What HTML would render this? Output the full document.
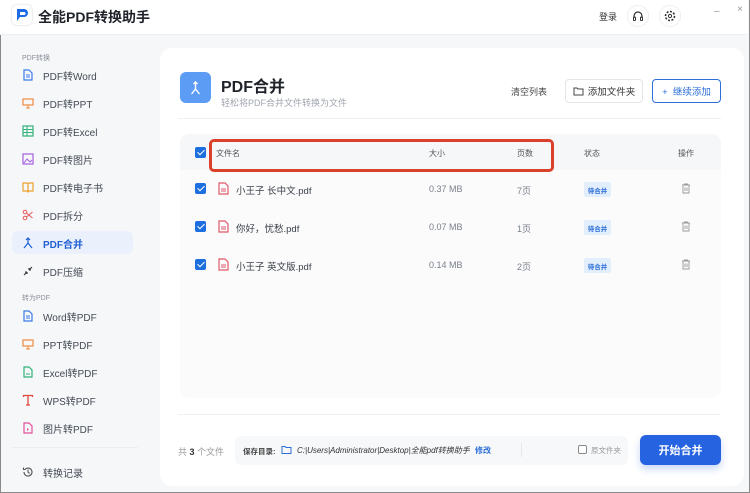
<!DOCTYPE html>
<html><head><meta charset="utf-8"><style>
*{box-sizing:border-box;margin:0;padding:0}
body{width:750px;height:493px;overflow:hidden;font-family:"Liberation Sans","Noto Sans CJK SC",sans-serif;background:#fff;position:relative}
.win{position:absolute;left:0;top:0;width:750px;height:493px;border:1px solid #8a8a8a;border-top:none;background:#f6f7f9}
.hdr{position:absolute;left:0;top:0;width:748px;height:35px;background:#fff;border-bottom:1px solid #eceef1}
.abs{position:absolute}
.side{font-size:10px;color:#3a3f47}
.it{position:absolute;left:22px;height:16px;display:flex;align-items:center;font-size:10px;color:#444b55}
.it svg{width:12px;height:12px;margin-right:9px}
.lbl{position:absolute;left:22px;font-size:7px;color:#8a909a}
.card{position:absolute;left:160px;top:48px;width:584px;height:438px;background:#fff;border-radius:12px}
.tbl{position:absolute;left:180px;top:134px;width:541px;height:264px;background:#fbfbfc;border-radius:9px}
.cb{position:absolute;width:11px;height:11px;background:#1d6fe0;border-radius:2px}
.cb:after{content:"";position:absolute;left:3.5px;top:1px;width:3px;height:6px;border:solid #fff;border-width:0 1.6px 1.6px 0;transform:rotate(45deg)}
.t{position:absolute;font-size:9.5px;color:#3b414a;white-space:nowrap}
.g{color:#7a808a}
.tag{position:absolute;width:27px;height:15px;background:#e3eefd;color:#2d6fd8;font-size:6.5px;font-weight:bold;display:flex;align-items:center;justify-content:center;border-radius:2px}
</style></head><body>
<div class="win"></div>
<div class="hdr"></div>
<div class="abs" style="left:12px;top:5px;width:20px;height:20px;border-radius:5px;background:#fff;box-shadow:0 0 2px #ccd"><svg width="20" height="20" viewBox="0 0 20 20"><path d="M5 4h7a4 4 0 0 1 0 8H8l-3 4z" fill="#1e6be6"/><path d="M8 7h4a1.5 1.5 0 0 1 0 3H8z" fill="#fff"/></svg></div>
<div class="abs" style="left:38px;top:7px;font-size:14px;font-weight:bold;color:#1f2329">全能PDF转换助手</div>
<div class="abs" style="left:599px;top:10px;font-size:9px;color:#333">登录</div>
<div class="abs" style="left:627px;top:5px;width:22px;height:22px;border-radius:50%;border:1px solid #eee"><svg width="20" height="20" viewBox="0 0 20 20"><path d="M6 12v-2a4 4 0 0 1 8 0v2" fill="none" stroke="#333" stroke-width="1.2"/><rect x="5.5" y="11" width="2" height="3.5" rx=".8" fill="none" stroke="#333"/><rect x="12.5" y="11" width="2" height="3.5" rx=".8" fill="none" stroke="#333"/></svg></div>
<div class="abs" style="left:659px;top:5px;width:22px;height:22px;border-radius:50%;border:1px solid #eee"><svg width="20" height="20" viewBox="0 0 20 20"><circle cx="10" cy="10" r="4.5" fill="none" stroke="#333" stroke-width="1.6" stroke-dasharray="2 1.5"/><circle cx="10" cy="10" r="1.6" fill="none" stroke="#333"/></svg></div>
<div class="abs" style="left:714px;top:6px;font-size:10px;color:#999">–</div>
<div class="abs" style="left:737px;top:4px;font-size:10px;color:#999">×</div>

<div class="lbl" style="top:53px">PDF转换</div>
<div class="it" style="top:67px"><svg viewBox="0 0 12 12"><path d="M2 1h5l3 3v7H2z" fill="none" stroke="#3b7be6" stroke-width="1.2"/><path d="M4 6h4M4 8h4" stroke="#3b7be6"/></svg>PDF转Word</div>
<div class="it" style="top:95px"><svg viewBox="0 0 12 12"><rect x="1" y="2" width="10" height="6" fill="none" stroke="#f08a3c" stroke-width="1.2"/><path d="M6 8v3M4 11h4" stroke="#f08a3c"/></svg>PDF转PPT</div>
<div class="it" style="top:123px"><svg viewBox="0 0 12 12"><rect x="1" y="1" width="10" height="10" fill="none" stroke="#2fb27a" stroke-width="1.2"/><path d="M1 4.5h10M1 7.5h10M5 1v10" stroke="#2fb27a"/></svg>PDF转Excel</div>
<div class="it" style="top:151px"><svg viewBox="0 0 12 12"><rect x="1" y="1" width="10" height="10" fill="none" stroke="#a35fdf" stroke-width="1.2"/><path d="M2 10l3-4 3 3 2-2" fill="none" stroke="#a35fdf"/></svg>PDF转图片</div>
<div class="it" style="top:179px"><svg viewBox="0 0 12 12"><path d="M1 2h4l1 1 1-1h4v8H7l-1 1-1-1H1zM6 3v8" fill="none" stroke="#eea12f" stroke-width="1.2"/></svg>PDF转电子书</div>
<div class="it" style="top:207px"><svg viewBox="0 0 12 12"><circle cx="3" cy="3" r="1.8" fill="none" stroke="#e65a5a"/><circle cx="3" cy="9" r="1.8" fill="none" stroke="#e65a5a"/><path d="M4.5 4l6 5M4.5 8l6-5" stroke="#e65a5a"/></svg>PDF拆分</div>
<div class="abs" style="left:12px;top:231px;width:121px;height:23px;background:#eaf1fd;border-radius:6px"></div>
<div class="it" style="top:235px;color:#1f5fd1;font-weight:bold"><svg viewBox="0 0 12 12"><path d="M6 1v5L2 11M6 6l4 5M4 3l2-2 2 2" fill="none" stroke="#1f5fd1" stroke-width="1.2"/></svg>PDF合并</div>
<div class="it" style="top:263px"><svg viewBox="0 0 12 12"><path d="M2 10l3-3M5 7H3M5 7v2M10 2L7 5M7 5h2M7 5V3" fill="none" stroke="#333" stroke-width="1.1"/></svg>PDF压缩</div>
<div class="lbl" style="top:293px">转为PDF</div>
<div class="it" style="top:308px"><svg viewBox="0 0 12 12"><path d="M2 1h5l3 3v7H2z" fill="none" stroke="#3b7be6" stroke-width="1.2"/><path d="M4 6h4M4 8h4" stroke="#3b7be6"/></svg>Word转PDF</div>
<div class="it" style="top:336px"><svg viewBox="0 0 12 12"><rect x="1" y="2" width="10" height="6" fill="none" stroke="#f08a3c" stroke-width="1.2"/><path d="M6 8v3M4 11h4" stroke="#f08a3c"/></svg>PPT转PDF</div>
<div class="it" style="top:364px"><svg viewBox="0 0 12 12"><path d="M2 1h5l3 3v7H2z" fill="none" stroke="#2fb27a" stroke-width="1.2"/><path d="M5 7v2M7 7v2" stroke="#2fb27a"/></svg>Excel转PDF</div>
<div class="it" style="top:392px"><svg viewBox="0 0 12 12"><path d="M1.5 3V1.5h9V3M6 1.5V11M4 11h4" fill="none" stroke="#e0483e" stroke-width="1.3"/></svg>WPS转PDF</div>
<div class="it" style="top:420px"><svg viewBox="0 0 12 12"><path d="M2 1h5l3 3v7H2z" fill="none" stroke="#e34f9a" stroke-width="1.2"/><path d="M5 6l2 1.5L5 9z" fill="#e34f9a"/></svg>图片转PDF</div>
<div class="abs" style="left:12px;top:447px;width:126px;height:1px;background:#eceef1"></div>
<div class="it" style="top:464px"><svg viewBox="0 0 12 12"><path d="M2 6a4 4 0 1 0 1.2-2.8M1.5 1.5v2h2M6 3.5V6l1.6 1.4" fill="none" stroke="#555" stroke-width="1.1"/></svg>转换记录</div>

<div class="card"></div>
<div class="abs" style="left:180px;top:72px;width:31px;height:31px;background:#5d9cf5;border-radius:6px"><svg width="31" height="31" viewBox="0 0 31 31"><path d="M15.5 10v7l-4 5M15.5 17l4 5M13.5 12l2-2 2 2" fill="none" stroke="#fff" stroke-width="1.4"/></svg></div>
<div class="abs" style="left:221px;top:73px;font-size:16px;font-weight:bold;color:#1f2329">PDF合并</div>
<div class="abs" style="left:221px;top:96px;font-size:9px;color:#a0a6af">轻松将PDF合并文件转换为文件</div>
<div class="abs" style="left:511px;top:85px;font-size:9px;color:#444">清空列表</div>
<div class="abs" style="left:565px;top:79px;width:78px;height:24px;border:1px solid #e2e5ea;border-radius:4px;font-size:9.5px;color:#333;display:flex;align-items:center;justify-content:center"><svg width="11" height="10" viewBox="0 0 11 10" style="margin-right:4px"><path d="M1 2h3l1 1h5v6H1z" fill="none" stroke="#444"/></svg>添加文件夹</div>
<div class="abs" style="left:652px;top:79px;width:69px;height:24px;border:1px solid #2d6fd8;border-radius:4px;font-size:9.5px;color:#2d6fd8;display:flex;align-items:center;justify-content:center">+&nbsp; 继续添加</div>
<div class="abs" style="left:178px;top:118px;width:543px;height:1px;background:#eef0f2"></div>

<div class="tbl"></div>
<div class="abs" style="left:180px;top:134px;width:541px;height:36px;background:#f6f7f9;border-radius:9px 9px 0 0"></div>
<div class="cb" style="left:195px;top:147px"></div>
<div class="t" style="left:216px;top:148px;font-size:8px;color:#555">文件名</div>
<div class="t" style="left:429px;top:148px;font-size:8px;color:#555">大小</div>
<div class="t" style="left:517px;top:148px;font-size:8px;color:#555">页数</div>
<div class="t" style="left:584px;top:148px;font-size:8px;color:#555">状态</div>
<div class="t" style="left:678px;top:148px;font-size:8px;color:#555">操作</div>
<div class="abs" style="left:209px;top:139px;width:345px;height:33px;border:3px solid #d9412b;border-radius:5px"></div>

<div class="cb" style="left:195px;top:183px"></div>
<svg class="abs" style="left:218px;top:182px" width="11" height="13" viewBox="0 0 11 13"><path d="M1 1h6l3 3v8H1z" fill="none" stroke="#e0596a" stroke-width="1.2"/><path d="M3 7h5M3 9h5" stroke="#e0596a"/></svg>
<div class="t" style="left:236px;top:183px">小王子 长中文.pdf</div>
<div class="t g" style="left:429px;top:184px;font-size:9px">0.37 MB</div>
<div class="t g" style="left:517px;top:184px;font-size:9px">7页</div>
<div class="tag" style="left:584px;top:182px">待合并</div>
<svg class="abs" style="left:681px;top:183px" width="10" height="11" viewBox="0 0 10 11"><path d="M1 2h8M3.5 2V1h3v1M2 2.5v7.5h6V2.5M4 4.5v3.5M6 4.5v3.5" fill="none" stroke="#999" stroke-width=".9"/></svg>

<div class="cb" style="left:195px;top:221px"></div>
<svg class="abs" style="left:218px;top:220px" width="11" height="13" viewBox="0 0 11 13"><path d="M1 1h6l3 3v8H1z" fill="none" stroke="#e0596a" stroke-width="1.2"/><path d="M3 7h5M3 9h5" stroke="#e0596a"/></svg>
<div class="t" style="left:236px;top:221px">你好，忧愁.pdf</div>
<div class="t g" style="left:429px;top:222px;font-size:9px">0.07 MB</div>
<div class="t g" style="left:517px;top:222px;font-size:9px">1页</div>
<div class="tag" style="left:584px;top:220px">待合并</div>
<svg class="abs" style="left:681px;top:221px" width="10" height="11" viewBox="0 0 10 11"><path d="M1 2h8M3.5 2V1h3v1M2 2.5v7.5h6V2.5M4 4.5v3.5M6 4.5v3.5" fill="none" stroke="#999" stroke-width=".9"/></svg>

<div class="cb" style="left:195px;top:259px"></div>
<svg class="abs" style="left:218px;top:258px" width="11" height="13" viewBox="0 0 11 13"><path d="M1 1h6l3 3v8H1z" fill="none" stroke="#e0596a" stroke-width="1.2"/><path d="M3 7h5M3 9h5" stroke="#e0596a"/></svg>
<div class="t" style="left:236px;top:259px">小王子 英文版.pdf</div>
<div class="t g" style="left:429px;top:260px;font-size:9px">0.14 MB</div>
<div class="t g" style="left:517px;top:260px;font-size:9px">2页</div>
<div class="tag" style="left:584px;top:258px">待合并</div>
<svg class="abs" style="left:681px;top:259px" width="10" height="11" viewBox="0 0 10 11"><path d="M1 2h8M3.5 2V1h3v1M2 2.5v7.5h6V2.5M4 4.5v3.5M6 4.5v3.5" fill="none" stroke="#999" stroke-width=".9"/></svg>

<div class="abs" style="left:178px;top:414px;width:543px;height:1px;background:#f0f1f3"></div>
<div class="abs" style="left:178px;top:445px;font-size:9px;color:#999">共 <b style="color:#333">3</b> 个文件</div>
<div class="abs" style="left:235px;top:436px;width:393px;height:29px;background:#f7f8fa;border-radius:6px"></div>
<div class="abs" style="left:243px;top:446px;font-size:7.5px;color:#444;font-weight:bold">保存目录:</div>
<svg class="abs" style="left:281px;top:445px" width="11" height="10" viewBox="0 0 11 10"><path d="M1 1.5h3l1 1h5v6H1z" fill="none" stroke="#2d6fd8"/></svg>
<div class="abs" style="left:297px;top:445px;font-size:8px;color:#333;font-style:italic">C:|Users|Administrator|Desktop|全能pdf转换助手 <span style="color:#2d6fd8;font-style:normal;font-weight:bold;margin-left:3px">修改</span></div>
<div class="abs" style="left:521px;top:443px;width:1px;height:14px;background:#e6e8eb"></div>
<div class="abs" style="left:578px;top:445px;width:9px;height:9px;border:1px solid #888;border-radius:2px;background:#fff"></div>
<div class="abs" style="left:591px;top:445px;font-size:7.5px;color:#999">原文件夹</div>
<div class="abs" style="left:640px;top:435px;width:81px;height:30px;background:#2563e0;border-radius:6px;color:#fff;font-size:11px;font-weight:bold;display:flex;align-items:center;justify-content:center;box-shadow:0 4px 8px rgba(37,99,224,.25)">开始合并</div>
</body></html>
